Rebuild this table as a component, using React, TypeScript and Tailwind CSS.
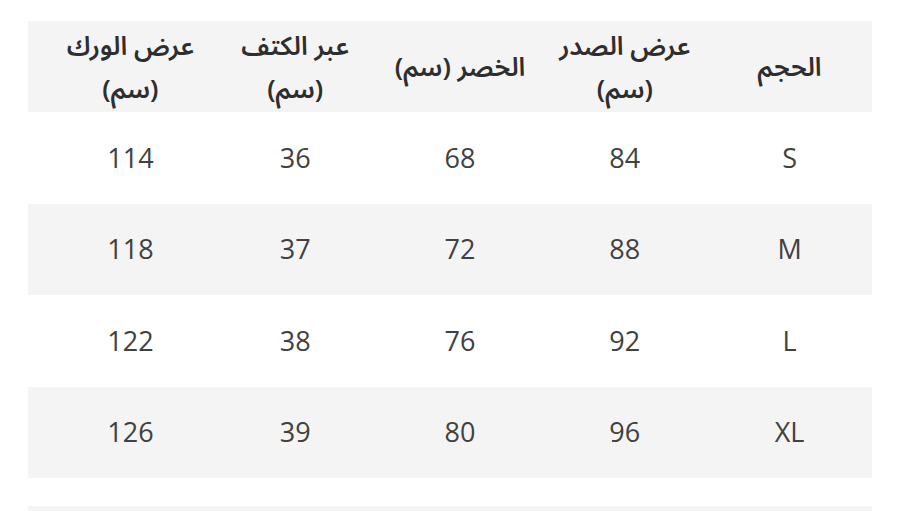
const headers = [
  ["الحجم"],
  ["عرض الصدر", "(سم)"],
  ["الخصر (سم)"],
  ["عبر الكتف", "(سم)"],
  ["عرض الورك", "(سم)"],
];

const rows = [
  ["S", "84", "68", "36", "114"],
  ["M", "88", "72", "37", "118"],
  ["L", "92", "76", "38", "122"],
  ["XL", "96", "80", "39", "126"],
];

export default function App() {
  return (
    <div className="w-[900px] h-[511px] overflow-hidden bg-white pt-[21px] pl-[28px]">
      <div dir="rtl" className="w-[844px]">
        <div className="grid grid-cols-5 h-[91px] bg-[#f4f4f4] pl-[20px] pt-[2px] text-[#2e2e2e] font-['Noto_Sans_Arabic','DejaVu_Sans',sans-serif] font-semibold text-[26px] leading-[43px]">
          {headers.map((h, i) => (
            <div key={i} className="flex flex-col items-center justify-center">
              {h.map((t, j) => (
                <span key={j}>{t}</span>
              ))}
            </div>
          ))}
        </div>
        {rows.map((r, i) => (
          <div
            key={i}
            className={`grid grid-cols-5 pl-[20px] text-[#414141] font-['Open_Sans',sans-serif] text-[27px] ${
              i % 2 === 0 ? "h-[92px] bg-white" : "h-[91px] bg-[#f4f4f4]"
            }`}
          >
            {r.map((c, j) => (
              <div key={j} className="flex items-center justify-center">
                {c}
              </div>
            ))}
          </div>
        ))}
        <div className="h-[28px]" />
        <div className="h-[40px] bg-[#f4f4f4]" />
      </div>
    </div>
  );
}
